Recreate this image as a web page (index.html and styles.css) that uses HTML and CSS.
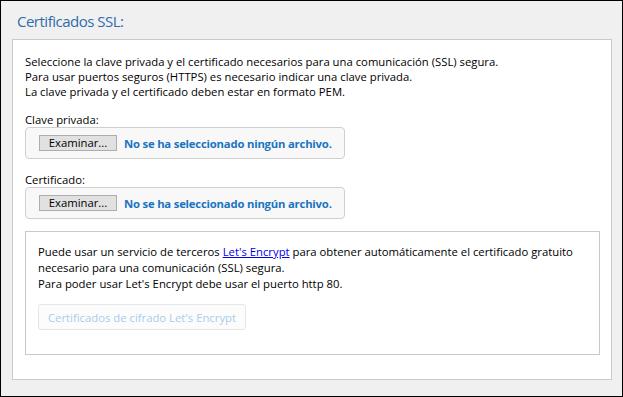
FILE: index.html
```html
<!DOCTYPE html>
<html lang="es">
<head>
  <meta charset="UTF-8">
  <title>Certificados SSL</title>
  <link rel="stylesheet" href="styles.css">
</head>
<body>
  <div class="window">
    <h1 class="section-title">Certificados SSL:</h1>
    <div class="panel">
      <p class="panel__intro">
        Seleccione la clave privada y el certificado necesarios para una comunicación (SSL) segura.<br>
        Para usar puertos seguros (HTTPS) es necesario indicar una clave privada.<br>
        La clave privada y el certificado deben estar en formato PEM.
      </p>

      <label class="field__label">Clave privada:</label>
      <div class="file-box">
        <button class="file-box__button">Examinar...</button>
        <span class="file-box__status">No se ha seleccionado ningún archivo.</span>
      </div>

      <label class="field__label">Certificado:</label>
      <div class="file-box">
        <button class="file-box__button">Examinar...</button>
        <span class="file-box__status">No se ha seleccionado ningún archivo.</span>
      </div>

      <div class="letsencrypt">
        <p class="letsencrypt__text">
          Puede usar un servicio de terceros <a href="#">Let's Encrypt</a> para obtener automáticamente el certificado gratuito<br>
          necesario para una comunicación (SSL) segura.<br>
          Para poder usar Let's Encrypt debe usar el puerto http 80.
        </p>
        <button class="letsencrypt__button" disabled>Certificados de cifrado Let's Encrypt</button>
      </div>
    </div>
  </div>
</body>
</html>
```

FILE: styles.css
```css
html, body {
  margin: 0;
  padding: 0;
}

body {
  font-family: 'Open Sans', 'Noto Sans', sans-serif;
  font-size: 11.3px;
  color: #000;
}

.window {
  box-sizing: border-box;
  width: 623px;
  height: 397px;
  border: 1px solid #000;
  background: #f0f0f0;
  padding: 0 10px 0 11px;
}

.section-title {
  box-sizing: border-box;
  margin: 0;
  height: 38px;
  padding: 10px 0 0 5px;
  font-size: 15px;
  font-weight: normal;
  line-height: 20px;
  letter-spacing: -0.5px;
  color: #2f6dab;
}

.panel {
  box-sizing: border-box;
  width: 600px;
  height: 341px;
  background: #fff;
  border: 1px solid #c9c9c9;
  padding: 14px 11px 0 12px;
}

.panel__intro {
  margin: 0 0 14px;
  line-height: 15px;
  white-space: nowrap;
}

.field__label {
  display: block;
  line-height: 14px;
}

.file-box {
  box-sizing: border-box;
  width: 320px;
  height: 32px;
  margin-bottom: 14px;
  display: flex;
  align-items: center;
  gap: 7px;
  padding-left: 13px;
  background: #f8f8f8;
  border: 1px solid #cfcfcf;
  border-radius: 4px;
}

.file-box__button {
  box-sizing: border-box;
  width: 78px;
  height: 16px;
  padding: 0;
  border: 1px solid #adadad;
  background: #e1e1e1;
  font-family: inherit;
  font-size: 11.3px;
  line-height: 14px;
  color: #000;
}

.file-box__status {
  font-weight: bold;
  letter-spacing: -0.2px;
  white-space: nowrap;
  color: #1a74c2;
}

.letsencrypt {
  box-sizing: border-box;
  width: 575px;
  height: 124px;
  margin-top: -2px;
  border: 1px solid #c9c9c9;
  padding: 12px 12px 0;
}

.letsencrypt__text {
  margin: 0 0 12px;
  line-height: 16px;
  white-space: nowrap;
}

.letsencrypt__text a {
  color: #0000ee;
}

.letsencrypt__button {
  box-sizing: border-box;
  width: 208px;
  height: 26px;
  padding: 0;
  background: #fcfcfc;
  border: 1px solid #e6e6e6;
  border-radius: 3px;
  font-family: inherit;
  font-size: 11.3px;
  color: #a9cdea;
}
```
